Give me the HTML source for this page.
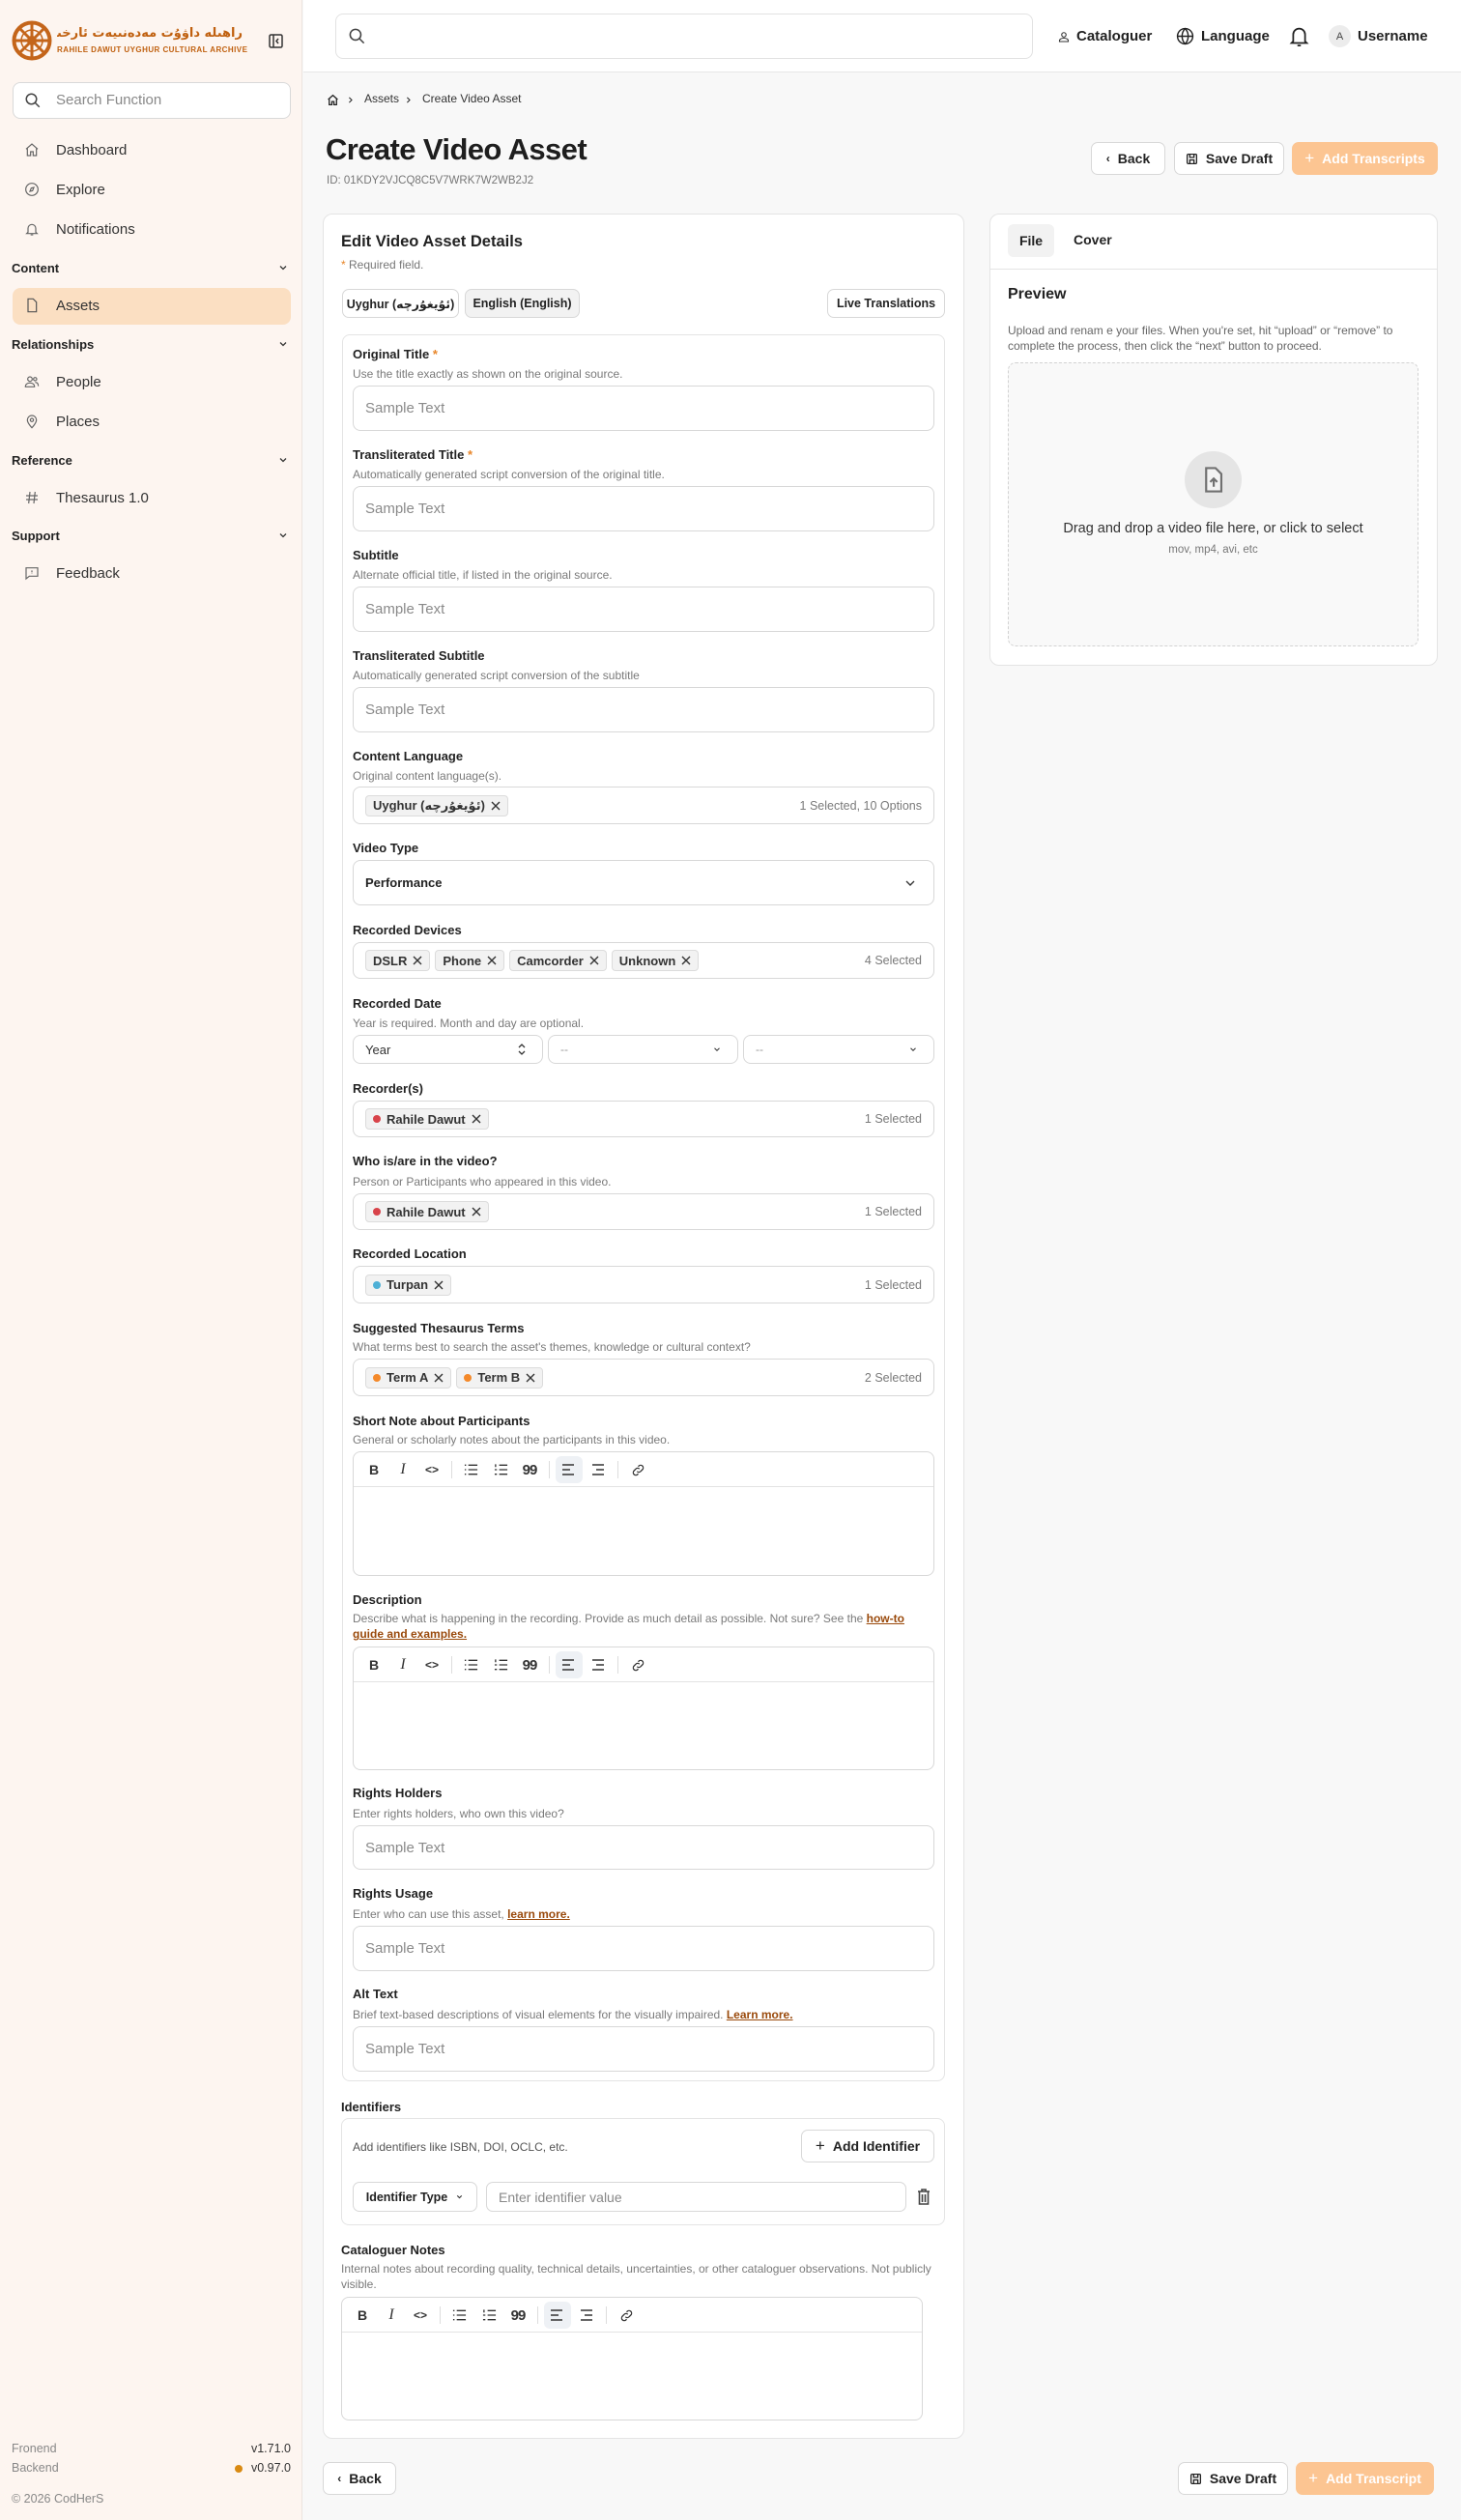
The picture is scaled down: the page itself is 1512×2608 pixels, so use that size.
<!DOCTYPE html>
<html><head><meta charset="utf-8">
<style>
*{box-sizing:border-box}
body{margin:0;width:1512px;height:2608px;background:#f8f8f8;font-family:"Liberation Sans","DejaVu Sans",sans-serif;color:#222;position:relative;overflow:hidden}
.a{position:absolute}
.lbl{position:absolute;left:365px;font-size:13px;font-weight:bold;line-height:18px;color:#222;white-space:nowrap}
.hlp{position:absolute;left:365px;font-size:12px;line-height:18px;color:#7a7a7a;white-space:nowrap}
.req{color:#e8862a}
.in{position:absolute;left:365px;width:602px;border:1px solid #d8d8d8;border-radius:8px;background:#fff;display:flex;align-items:center;padding-left:12px;font-size:15px;color:#8a8a8a}
.box{position:absolute;left:365px;width:602px;border:1px solid #d8d8d8;border-radius:8px;background:#fff;display:flex;align-items:center;padding:0 12px;gap:5px}
.tag{display:inline-flex;align-items:center;gap:6px;height:22px;padding:0 7px;background:#f2f2f2;border:1px solid #dcdcdc;border-radius:4px;font-size:13px;font-weight:bold;color:#333;white-space:nowrap}
.cnt{margin-left:auto;font-size:12.5px;color:#7a7a7a;white-space:nowrap}
.dot{width:8px;height:8px;border-radius:50%;display:inline-block}
.btn{position:absolute;height:34px;border:1px solid #d8d8d8;border-radius:7px;background:#fff;display:flex;align-items:center;justify-content:center;gap:8px;font-size:14px;font-weight:bold;color:#222}
.ed{position:absolute;border:1px solid #d8d8d8;border-radius:8px;background:#fff}
.ed .tb{position:absolute;left:0;right:0;top:0;height:36px;border-bottom:1px solid #e3e3e3}
.ed .i{position:absolute;top:10px;width:16px;height:16px;margin-left:-8px;display:flex;align-items:center;justify-content:center;font-size:14px;color:#333}
.ed .sp{position:absolute;top:9px;width:1px;height:18px;background:#ddd}
.ed .act{position:absolute;top:4px;width:28px;height:28px;border-radius:6px;background:#eef1f5}
.nav{position:absolute;left:58px;font-size:15px;color:#333;line-height:20px}
.nic{position:absolute;left:25px;width:16px;height:16px}
.sec{position:absolute;left:12px;font-size:13px;font-weight:bold;color:#222;line-height:18px}
.chev{position:absolute;left:287px}
a{color:#9a4a0c;font-weight:bold;text-decoration:underline}
</style></head><body>

<!-- SIDEBAR -->
<div class="a" style="left:0;top:0;width:313px;height:2608px;background:#fdf5f0;border-right:1px solid #ebe4df"></div>
<svg class="a" style="left:12px;top:21px" width="42" height="42" viewBox="0 0 42 42"><circle cx="21" cy="21" r="18.5" fill="none" stroke="#c4651a" stroke-width="4"/><circle cx="21" cy="21" r="5" fill="#c4651a"/><g stroke="#c4651a" stroke-width="3"><path d="M21 3v36M3 21h36M8 8l26 26M34 8L8 34"/></g><circle cx="21" cy="21" r="11" fill="none" stroke="#c4651a" stroke-width="1.5"/></svg>
<div class="a" style="left:59px;top:25px;width:192px;overflow:hidden;text-align:right;font-family:'DejaVu Sans',sans-serif;font-size:13px;font-weight:bold;color:#c0600f;direction:rtl;line-height:20px;white-space:nowrap;letter-spacing:0.3px">راھىلە داۋۇت مەدەنىيەت ئارخىپى</div>
<div class="a" style="left:59px;top:47px;font-size:8px;font-weight:bold;color:#c0600f;letter-spacing:0.45px;white-space:nowrap;line-height:10px">RAHILE DAWUT UYGHUR CULTURAL ARCHIVE</div>
<svg class="a" style="left:278px;top:35px" width="15" height="15" viewBox="0 0 15 15" fill="none" stroke="#333" stroke-width="1.5"><rect x="1" y="1" width="13" height="13" rx="1.5"/><path d="M5 1v13"/><path d="M10 5l-2 2.5 2 2.5" /></svg>
<div class="a" style="left:13px;top:85px;width:288px;height:38px;border:1px solid #d9d9d9;border-radius:8px;background:#fff"></div>
<svg class="a" style="left:25px;top:95px" width="18" height="18" viewBox="0 0 24 24" fill="none" stroke="#444" stroke-width="2"><circle cx="10" cy="10" r="7"/><path d="M15 15l6 6"/></svg>
<div class="nav" style="top:94px;color:#888">Search Function</div>

<svg class="nic" style="top:147px" viewBox="0 0 24 24" fill="none" stroke="#666" stroke-width="1.8"><path d="M3 11l9-8 9 8M5 9v12h5v-6h4v6h5V9"/></svg><div class="nav" style="top:146px">Dashboard</div>
<svg class="nic" style="top:188px" viewBox="0 0 24 24" fill="none" stroke="#666" stroke-width="1.8"><circle cx="12" cy="12" r="9.5"/><path d="M15 9l-2 5-4 1 2-5z"/></svg><div class="nav" style="top:187px">Explore</div>
<svg class="nic" style="top:229px" viewBox="0 0 24 24" fill="none" stroke="#666" stroke-width="1.8"><path d="M6 17V11a6 6 0 0112 0v6l2 2H4z"/><path d="M10 21h4"/></svg><div class="nav" style="top:228px">Notifications</div>
<div class="sec" style="top:269px">Content</div>
<svg class="chev" style="top:271px" width="12" height="12" viewBox="0 0 24 24" fill="none" stroke="#333" stroke-width="2.5"><path d="M6 9l6 6 6-6"/></svg>
<div class="a" style="left:13px;top:298px;width:288px;height:38px;border-radius:8px;background:#fbdfc2"></div>
<svg class="nic" style="top:308px" viewBox="0 0 24 24" fill="none" stroke="#555" stroke-width="1.8"><path d="M6 2h8l5 5v15H6z"/></svg><div class="nav" style="top:307px">Assets</div>
<div class="sec" style="top:348px">Relationships</div>
<svg class="chev" style="top:350px" width="12" height="12" viewBox="0 0 24 24" fill="none" stroke="#333" stroke-width="2.5"><path d="M6 9l6 6 6-6"/></svg>
<svg class="nic" style="top:387px" viewBox="0 0 24 24" fill="none" stroke="#666" stroke-width="1.8"><circle cx="9" cy="8" r="3.5"/><circle cx="17" cy="8" r="2.5"/><path d="M2 20c0-4 3-6 7-6s7 2 7 6zM17 13c3 0 5 2 5 6"/></svg><div class="nav" style="top:386px">People</div>
<svg class="nic" style="top:428px" viewBox="0 0 24 24" fill="none" stroke="#666" stroke-width="1.8"><path d="M12 22s-7-7-7-12a7 7 0 0114 0c0 5-7 12-7 12z"/><circle cx="12" cy="10" r="2.5"/></svg><div class="nav" style="top:427px">Places</div>
<div class="sec" style="top:468px">Reference</div>
<svg class="chev" style="top:470px" width="12" height="12" viewBox="0 0 24 24" fill="none" stroke="#333" stroke-width="2.5"><path d="M6 9l6 6 6-6"/></svg>
<svg class="nic" style="top:507px" viewBox="0 0 24 24" fill="none" stroke="#666" stroke-width="1.8"><path d="M9 3L7 21M17 3l-2 18M3 9h18M3 15h18"/></svg><div class="nav" style="top:506px">Thesaurus 1.0</div>
<div class="sec" style="top:546px">Support</div>
<svg class="chev" style="top:548px" width="12" height="12" viewBox="0 0 24 24" fill="none" stroke="#333" stroke-width="2.5"><path d="M6 9l6 6 6-6"/></svg>
<svg class="nic" style="top:585px" viewBox="0 0 24 24" fill="none" stroke="#666" stroke-width="1.8"><path d="M3 4h18v13H8l-5 4z"/><path d="M12 8v3M12 13v.5"/></svg><div class="nav" style="top:584px">Feedback</div>

<div class="a" style="left:12px;top:2527px;font-size:12.5px;color:#888">Fronend</div>
<div class="a" style="left:12px;top:2547px;font-size:12.5px;color:#888">Backend</div>
<div class="a" style="left:240px;top:2527px;width:61px;text-align:right;font-size:12.5px;color:#333">v1.71.0</div>
<div class="a" style="left:243px;top:2551px;width:8px;height:8px;border-radius:50%;background:#d98a12"></div>
<div class="a" style="left:240px;top:2547px;width:61px;text-align:right;font-size:12.5px;color:#333">v0.97.0</div>
<div class="a" style="left:12px;top:2579px;font-size:12.5px;color:#888">© 2026 CodHerS</div>

<!-- HEADER -->
<div class="a" style="left:314px;top:0;width:1198px;height:75px;background:#fff;border-bottom:1px solid #e6e6e6"></div>
<div class="a" style="left:347px;top:14px;width:722px;height:47px;border:1.5px solid #e2e2e2;border-radius:8px;background:#fff"></div>
<svg class="a" style="left:360px;top:28px" width="19" height="19" viewBox="0 0 24 24" fill="none" stroke="#444" stroke-width="2"><circle cx="10" cy="10" r="7"/><path d="M15 15l6 6"/></svg>
<svg class="a" style="left:1095px;top:32px" width="12" height="12" viewBox="0 0 24 24" fill="none" stroke="#333" stroke-width="2.2"><circle cx="12" cy="8" r="4.5"/><path d="M3 22v-2c0-3 4-5 9-5s9 2 9 5v2z"/></svg>
<div class="a" style="left:1114px;top:29px;font-size:15px;font-weight:bold;color:#222">Cataloguer</div>
<svg class="a" style="left:1217px;top:28px" width="19" height="19" viewBox="0 0 24 24" fill="none" stroke="#222" stroke-width="1.8"><circle cx="12" cy="12" r="10"/><path d="M2 12h20M12 2c3 3 4 6.5 4 10s-1 7-4 10c-3-3-4-6.5-4-10s1-7 4-10z"/></svg>
<div class="a" style="left:1243px;top:29px;font-size:15px;font-weight:bold;color:#222">Language</div>
<svg class="a" style="left:1334px;top:26px" width="21" height="23" viewBox="0 0 24 26" fill="none" stroke="#222" stroke-width="2"><path d="M5 19V11a7 7 0 0114 0v8l2 2H3z"/><path d="M10 24h4"/></svg>
<div class="a" style="left:1375px;top:26px;width:23px;height:23px;border-radius:50%;background:#ececec;font-size:11px;color:#444;display:flex;align-items:center;justify-content:center">A</div>
<div class="a" style="left:1405px;top:29px;font-size:15px;font-weight:bold;color:#222">Username</div>

<!-- PAGE TOP -->
<svg class="a" style="left:338px;top:97px" width="13" height="13" viewBox="0 0 24 24" fill="none" stroke="#222" stroke-width="2.4"><path d="M3 11l9-8 9 8M5 9v12h5v-6h4v6h5V9"/></svg>
<svg class="a" style="left:358px;top:99px" width="9" height="9" viewBox="0 0 24 24" fill="none" stroke="#333" stroke-width="3"><path d="M9 5l7 7-7 7"/></svg>
<div class="a" style="left:377px;top:95px;font-size:12px;color:#333">Assets</div>
<svg class="a" style="left:418px;top:99px" width="9" height="9" viewBox="0 0 24 24" fill="none" stroke="#333" stroke-width="3"><path d="M9 5l7 7-7 7"/></svg>
<div class="a" style="left:437px;top:95px;font-size:12px;color:#333">Create Video Asset</div>
<div class="a" style="left:337px;top:135px;font-size:31px;font-weight:bold;color:#1e1e1e;letter-spacing:-0.6px;line-height:40px">Create Video Asset</div>
<div class="a" style="left:338px;top:181px;font-size:11.5px;color:#777">ID: 01KDY2VJCQ8C5V7WRK7W2WB2J2</div>
<div class="btn" style="left:1129px;top:147px;width:77px"><span style="font-size:12px">‹</span>Back</div>
<div class="btn" style="left:1215px;top:147px;width:114px"><svg width="13" height="13" viewBox="0 0 24 24" fill="none" stroke="#222" stroke-width="2.4"><rect x="3" y="3" width="18" height="18" rx="2"/><path d="M8 3v6h8V3M8 21v-7h8v7"/></svg>Save Draft</div>
<div class="btn" style="left:1337px;top:147px;width:151px;background:#fcc592;border-color:#fcc592;color:#fff"><span style="font-size:17px;font-weight:normal">+</span>Add Transcripts</div>

<!-- MAIN CARD -->
<div class="a" style="left:334px;top:221px;width:664px;height:2303px;background:#fff;border:1px solid #e4e4e4;border-radius:10px"></div>
<div class="a" style="left:353px;top:241px;font-size:16.5px;font-weight:bold;color:#222">Edit Video Asset Details</div>
<div class="a" style="left:353px;top:267px;font-size:12px;color:#777"><span class="req">*</span> Required field.</div>
<div class="a" style="left:354px;top:299px;width:121px;height:30px;border:1px solid #d8d8d8;border-radius:7px;background:#fff;font-size:12.5px;font-weight:bold;display:flex;align-items:center;justify-content:center;font-family:'Liberation Sans','DejaVu Sans',sans-serif">Uyghur (ئۇيغۇرچە)</div>
<div class="a" style="left:481px;top:299px;width:119px;height:30px;border:1px solid #d8d8d8;border-radius:7px;background:#f2f2f2;font-size:12.5px;font-weight:bold;display:flex;align-items:center;justify-content:center">English (English)</div>
<div class="a" style="left:856px;top:299px;width:122px;height:30px;border:1px solid #d8d8d8;border-radius:7px;background:#fff;font-size:12.5px;font-weight:bold;display:flex;align-items:center;justify-content:center">Live Translations</div>

<div class="a" style="left:354px;top:346px;width:624px;height:1808px;border:1px solid #e4e4e4;border-radius:8px"></div>

<div class="lbl" style="top:358px">Original Title <span class="req">*</span></div>
<div class="hlp" style="top:378px">Use the title exactly as shown on the original source.</div>
<div class="in" style="top:399px;height:47px">Sample Text</div>

<div class="lbl" style="top:462px">Transliterated Title <span class="req">*</span></div>
<div class="hlp" style="top:482px">Automatically generated script conversion of the original title.</div>
<div class="in" style="top:503px;height:47px">Sample Text</div>

<div class="lbl" style="top:566px">Subtitle</div>
<div class="hlp" style="top:586px">Alternate official title, if listed in the original source.</div>
<div class="in" style="top:607px;height:47px">Sample Text</div>

<div class="lbl" style="top:670px">Transliterated Subtitle</div>
<div class="hlp" style="top:690px">Automatically generated script conversion of the subtitle</div>
<div class="in" style="top:711px;height:47px">Sample Text</div>

<div class="lbl" style="top:774px">Content Language</div>
<div class="hlp" style="top:794px">Original content language(s).</div>
<div class="box" style="top:814px;height:39px"><span class="tag">Uyghur (ئۇيغۇرچە) <svg width="10" height="10" viewBox="0 0 10 10" stroke="#333" stroke-width="1.4"><path d="M1 1l8 8M9 1l-8 8"/></svg></span><span class="cnt">1 Selected, 10 Options</span></div>

<div class="lbl" style="top:869px">Video Type</div>
<div class="box" style="top:890px;height:47px;font-size:13px;font-weight:bold;color:#222">Performance<svg style="margin-left:auto;margin-right:4px" width="16" height="16" viewBox="0 0 24 24" fill="none" stroke="#333" stroke-width="2"><path d="M6 9l6 6 6-6"/></svg></div>

<div class="lbl" style="top:954px">Recorded Devices</div>
<div class="box" style="top:975px;height:38px"><span class="tag">DSLR <svg width="10" height="10" viewBox="0 0 10 10" stroke="#333" stroke-width="1.4"><path d="M1 1l8 8M9 1l-8 8"/></svg></span><span class="tag">Phone <svg width="10" height="10" viewBox="0 0 10 10" stroke="#333" stroke-width="1.4"><path d="M1 1l8 8M9 1l-8 8"/></svg></span><span class="tag">Camcorder <svg width="10" height="10" viewBox="0 0 10 10" stroke="#333" stroke-width="1.4"><path d="M1 1l8 8M9 1l-8 8"/></svg></span><span class="tag">Unknown <svg width="10" height="10" viewBox="0 0 10 10" stroke="#333" stroke-width="1.4"><path d="M1 1l8 8M9 1l-8 8"/></svg></span><span class="cnt">4 Selected</span></div>

<div class="lbl" style="top:1030px">Recorded Date</div>
<div class="hlp" style="top:1050px">Year is required. Month and day are optional.</div>
<div class="box" style="top:1071px;height:30px;left:365px;width:197px;font-size:13px;color:#333">Year<svg style="margin-left:auto;margin-right:4px" width="10" height="12" viewBox="0 0 10 12" fill="none" stroke="#333" stroke-width="1.3"><path d="M2 4l3-3 3 3M2 8l3 3 3-3"/></svg></div>
<div class="box" style="top:1071px;height:30px;left:567px;width:197px;font-size:12px;color:#999">--<svg style="margin-left:auto;margin-right:4px" width="10" height="10" viewBox="0 0 24 24" fill="none" stroke="#333" stroke-width="2.5"><path d="M6 9l6 6 6-6"/></svg></div>
<div class="box" style="top:1071px;height:30px;left:769px;width:198px;font-size:12px;color:#999">--<svg style="margin-left:auto;margin-right:4px" width="10" height="10" viewBox="0 0 24 24" fill="none" stroke="#333" stroke-width="2.5"><path d="M6 9l6 6 6-6"/></svg></div>

<div class="lbl" style="top:1118px">Recorder(s)</div>
<div class="box" style="top:1139px;height:38px"><span class="tag"><i class="dot" style="background:#d8434a"></i>Rahile Dawut <svg width="10" height="10" viewBox="0 0 10 10" stroke="#333" stroke-width="1.4"><path d="M1 1l8 8M9 1l-8 8"/></svg></span><span class="cnt">1 Selected</span></div>

<div class="lbl" style="top:1193px">Who is/are in the video?</div>
<div class="hlp" style="top:1214px">Person or Participants who appeared in this video.</div>
<div class="box" style="top:1235px;height:38px"><span class="tag"><i class="dot" style="background:#d8434a"></i>Rahile Dawut <svg width="10" height="10" viewBox="0 0 10 10" stroke="#333" stroke-width="1.4"><path d="M1 1l8 8M9 1l-8 8"/></svg></span><span class="cnt">1 Selected</span></div>

<div class="lbl" style="top:1289px">Recorded Location</div>
<div class="box" style="top:1310px;height:39px"><span class="tag"><i class="dot" style="background:#4eb0d6"></i>Turpan <svg width="10" height="10" viewBox="0 0 10 10" stroke="#333" stroke-width="1.4"><path d="M1 1l8 8M9 1l-8 8"/></svg></span><span class="cnt">1 Selected</span></div>

<div class="lbl" style="top:1366px">Suggested Thesaurus Terms</div>
<div class="hlp" style="top:1385px">What terms best to search the asset's themes, knowledge or cultural context?</div>
<div class="box" style="top:1406px;height:39px"><span class="tag"><i class="dot" style="background:#f4892a"></i>Term A <svg width="10" height="10" viewBox="0 0 10 10" stroke="#333" stroke-width="1.4"><path d="M1 1l8 8M9 1l-8 8"/></svg></span><span class="tag"><i class="dot" style="background:#f4892a"></i>Term B <svg width="10" height="10" viewBox="0 0 10 10" stroke="#333" stroke-width="1.4"><path d="M1 1l8 8M9 1l-8 8"/></svg></span><span class="cnt">2 Selected</span></div>

<div class="lbl" style="top:1462px">Short Note about Participants</div>
<div class="hlp" style="top:1481px">General or scholarly notes about the participants in this video.</div>
<div class="ed" style="left:365px;top:1502px;width:602px;height:129px">
 <div class="tb"></div>
 <div class="act" style="left:209px"></div>
 <div class="i" style="left:21px;font-weight:bold">B</div>
 <div class="i" style="left:51px;font-style:italic;font-family:'Liberation Serif',serif;font-size:16px">I</div>
 <div class="i" style="left:81px;font-size:12px;font-weight:bold">&lt;&gt;</div>
 <div class="sp" style="left:101px"></div>
 <div class="i" style="left:121px"><svg width="15" height="14" viewBox="0 0 16 14" stroke="#333" stroke-width="1.4"><path d="M5 2h10M5 7h10M5 12h10M1 2h1.5M1 7h1.5M1 12h1.5"/></svg></div>
 <div class="i" style="left:152px"><svg width="15" height="14" viewBox="0 0 16 14" stroke="#333" stroke-width="1.4"><path d="M6 2h9M6 7h9M6 12h9M2 1v3M1 7h2.5M1 12h2.5"/></svg></div>
 <div class="i" style="left:182px;font-weight:bold;font-size:15px;letter-spacing:-1px">99</div>
 <div class="sp" style="left:202px"></div>
 <div class="i" style="left:222px"><svg width="14" height="12" viewBox="0 0 14 12" stroke="#333" stroke-width="1.4"><path d="M1 1h12M1 6h8M1 11h12"/></svg></div>
 <div class="i" style="left:253px"><svg width="14" height="12" viewBox="0 0 14 12" stroke="#333" stroke-width="1.4"><path d="M1 1h12M5 6h8M1 11h12"/></svg></div>
 <div class="sp" style="left:273px"></div>
 <div class="i" style="left:294px"><svg width="15" height="15" viewBox="0 0 24 24" fill="none" stroke="#333" stroke-width="2"><path d="M10 14a4 4 0 006 0l3-3a4 4 0 00-6-6l-1 1M14 10a4 4 0 00-6 0l-3 3a4 4 0 006 6l1-1"/></svg></div>
</div>

<div class="lbl" style="top:1647px">Description</div>
<div class="hlp" style="top:1667px;line-height:16px;white-space:normal;width:602px">Describe what is happening in the recording. Provide as much detail as possible. Not sure? See the <a>how-to guide and examples.</a></div>
<div class="ed" style="left:365px;top:1704px;width:602px;height:128px">
 <div class="tb"></div>
 <div class="act" style="left:209px"></div>
 <div class="i" style="left:21px;font-weight:bold">B</div>
 <div class="i" style="left:51px;font-style:italic;font-family:'Liberation Serif',serif;font-size:16px">I</div>
 <div class="i" style="left:81px;font-size:12px;font-weight:bold">&lt;&gt;</div>
 <div class="sp" style="left:101px"></div>
 <div class="i" style="left:121px"><svg width="15" height="14" viewBox="0 0 16 14" stroke="#333" stroke-width="1.4"><path d="M5 2h10M5 7h10M5 12h10M1 2h1.5M1 7h1.5M1 12h1.5"/></svg></div>
 <div class="i" style="left:152px"><svg width="15" height="14" viewBox="0 0 16 14" stroke="#333" stroke-width="1.4"><path d="M6 2h9M6 7h9M6 12h9M2 1v3M1 7h2.5M1 12h2.5"/></svg></div>
 <div class="i" style="left:182px;font-weight:bold;font-size:15px;letter-spacing:-1px">99</div>
 <div class="sp" style="left:202px"></div>
 <div class="i" style="left:222px"><svg width="14" height="12" viewBox="0 0 14 12" stroke="#333" stroke-width="1.4"><path d="M1 1h12M1 6h8M1 11h12"/></svg></div>
 <div class="i" style="left:253px"><svg width="14" height="12" viewBox="0 0 14 12" stroke="#333" stroke-width="1.4"><path d="M1 1h12M5 6h8M1 11h12"/></svg></div>
 <div class="sp" style="left:273px"></div>
 <div class="i" style="left:294px"><svg width="15" height="15" viewBox="0 0 24 24" fill="none" stroke="#333" stroke-width="2"><path d="M10 14a4 4 0 006 0l3-3a4 4 0 00-6-6l-1 1M14 10a4 4 0 00-6 0l-3 3a4 4 0 006 6l1-1"/></svg></div>
</div>

<div class="lbl" style="top:1847px">Rights Holders</div>
<div class="hlp" style="top:1868px">Enter rights holders, who own this video?</div>
<div class="in" style="top:1889px;height:46px">Sample Text</div>

<div class="lbl" style="top:1951px">Rights Usage</div>
<div class="hlp" style="top:1972px">Enter who can use this asset, <a>learn more.</a></div>
<div class="in" style="top:1993px;height:47px">Sample Text</div>

<div class="lbl" style="top:2055px">Alt Text</div>
<div class="hlp" style="top:2076px">Brief text-based descriptions of visual elements for the visually impaired. <a>Learn more.</a></div>
<div class="in" style="top:2097px;height:47px">Sample Text</div>

<div class="lbl" style="top:2172px;left:353px">Identifiers</div>
<div class="a" style="left:353px;top:2192px;width:625px;height:111px;border:1px solid #e4e4e4;border-radius:8px"></div>
<div class="hlp" style="top:2213px;color:#555">Add identifiers like ISBN, DOI, OCLC, etc.</div>
<div class="btn" style="left:829px;top:2204px;width:138px"><span style="font-size:17px;font-weight:normal">+</span>Add Identifier</div>
<div class="a" style="left:365px;top:2258px;width:129px;height:31px;border:1px solid #d8d8d8;border-radius:7px;display:flex;align-items:center;justify-content:center;gap:8px;font-size:12.5px;font-weight:bold">Identifier Type <svg width="9" height="9" viewBox="0 0 24 24" fill="none" stroke="#333" stroke-width="3"><path d="M6 9l6 6 6-6"/></svg></div>
<div class="a" style="left:503px;top:2258px;width:435px;height:31px;border:1px solid #d8d8d8;border-radius:7px;display:flex;align-items:center;padding-left:12px;font-size:14px;color:#888">Enter identifier value</div>
<svg class="a" style="left:949px;top:2265px" width="14" height="17" viewBox="0 0 14 17" fill="none" stroke="#444" stroke-width="1.6"><path d="M1 3h12M5 3V1h4v2M2.5 3v13h9V3M5.5 6v8M8.5 6v8"/></svg>

<div class="lbl" style="top:2320px;left:353px">Cataloguer Notes</div>
<div class="hlp" style="top:2340px;left:353px;line-height:16px;white-space:normal;width:615px">Internal notes about recording quality, technical details, uncertainties, or other cataloguer observations. Not publicly visible.</div>
<div class="ed" style="left:353px;top:2377px;width:602px;height:128px">
 <div class="tb"></div>
 <div class="act" style="left:209px"></div>
 <div class="i" style="left:21px;font-weight:bold">B</div>
 <div class="i" style="left:51px;font-style:italic;font-family:'Liberation Serif',serif;font-size:16px">I</div>
 <div class="i" style="left:81px;font-size:12px;font-weight:bold">&lt;&gt;</div>
 <div class="sp" style="left:101px"></div>
 <div class="i" style="left:121px"><svg width="15" height="14" viewBox="0 0 16 14" stroke="#333" stroke-width="1.4"><path d="M5 2h10M5 7h10M5 12h10M1 2h1.5M1 7h1.5M1 12h1.5"/></svg></div>
 <div class="i" style="left:152px"><svg width="15" height="14" viewBox="0 0 16 14" stroke="#333" stroke-width="1.4"><path d="M6 2h9M6 7h9M6 12h9M2 1v3M1 7h2.5M1 12h2.5"/></svg></div>
 <div class="i" style="left:182px;font-weight:bold;font-size:15px;letter-spacing:-1px">99</div>
 <div class="sp" style="left:202px"></div>
 <div class="i" style="left:222px"><svg width="14" height="12" viewBox="0 0 14 12" stroke="#333" stroke-width="1.4"><path d="M1 1h12M1 6h8M1 11h12"/></svg></div>
 <div class="i" style="left:253px"><svg width="14" height="12" viewBox="0 0 14 12" stroke="#333" stroke-width="1.4"><path d="M1 1h12M5 6h8M1 11h12"/></svg></div>
 <div class="sp" style="left:273px"></div>
 <div class="i" style="left:294px"><svg width="15" height="15" viewBox="0 0 24 24" fill="none" stroke="#333" stroke-width="2"><path d="M10 14a4 4 0 006 0l3-3a4 4 0 00-6-6l-1 1M14 10a4 4 0 00-6 0l-3 3a4 4 0 006 6l1-1"/></svg></div>
</div>

<!-- RIGHT CARD -->
<div class="a" style="left:1024px;top:221px;width:464px;height:468px;background:#fff;border:1px solid #e4e4e4;border-radius:10px"></div>
<div class="a" style="left:1043px;top:232px;width:48px;height:34px;border-radius:6px;background:#f2f2f2;font-size:14px;font-weight:bold;display:flex;align-items:center;justify-content:center">File</div>
<div class="a" style="left:1111px;top:240px;font-size:14px;font-weight:bold">Cover</div>
<div class="a" style="left:1025px;top:278px;width:462px;height:1px;background:#e4e4e4"></div>
<div class="a" style="left:1043px;top:296px;font-size:16px;font-weight:bold">Preview</div>
<div class="a" style="left:1043px;top:334px;width:430px;font-size:12px;line-height:16px;color:#666">Upload and renam e your files. When you're set, hit “upload” or “remove” to<br>complete the process, then click the “next” button to proceed.</div>
<div class="a" style="left:1043px;top:375px;width:425px;height:294px;border:1px dashed #d2d2d2;border-radius:8px;background:#f9f9f9"></div>
<div class="a" style="left:1226px;top:467px;width:59px;height:59px;border-radius:50%;background:#e5e5e5"></div>
<svg class="a" style="left:1241px;top:482px" width="29" height="29" viewBox="0 0 24 24" fill="none" stroke="#707070" stroke-width="1.8"><path d="M6 2h8l5 5v15H6z" fill="#f3f3f3"/><path d="M12.5 18v-7M9.5 14l3-3 3 3"/></svg>
<div class="a" style="left:1043px;top:539px;width:425px;text-align:center;font-size:14.5px;color:#333">Drag and drop a video file here, or click to select</div>
<div class="a" style="left:1043px;top:563px;width:425px;text-align:center;font-size:11.5px;color:#777">mov, mp4, avi, etc</div>

<!-- BOTTOM BUTTONS -->
<div class="btn" style="left:334px;top:2548px;width:76px"><span style="font-size:12px">‹</span>Back</div>
<div class="btn" style="left:1219px;top:2548px;width:114px"><svg width="13" height="13" viewBox="0 0 24 24" fill="none" stroke="#222" stroke-width="2.4"><rect x="3" y="3" width="18" height="18" rx="2"/><path d="M8 3v6h8V3M8 21v-7h8v7"/></svg>Save Draft</div>
<div class="btn" style="left:1341px;top:2548px;width:143px;background:#fcc592;border-color:#fcc592;color:#fff"><span style="font-size:17px;font-weight:normal">+</span>Add Transcript</div>
</body></html>
